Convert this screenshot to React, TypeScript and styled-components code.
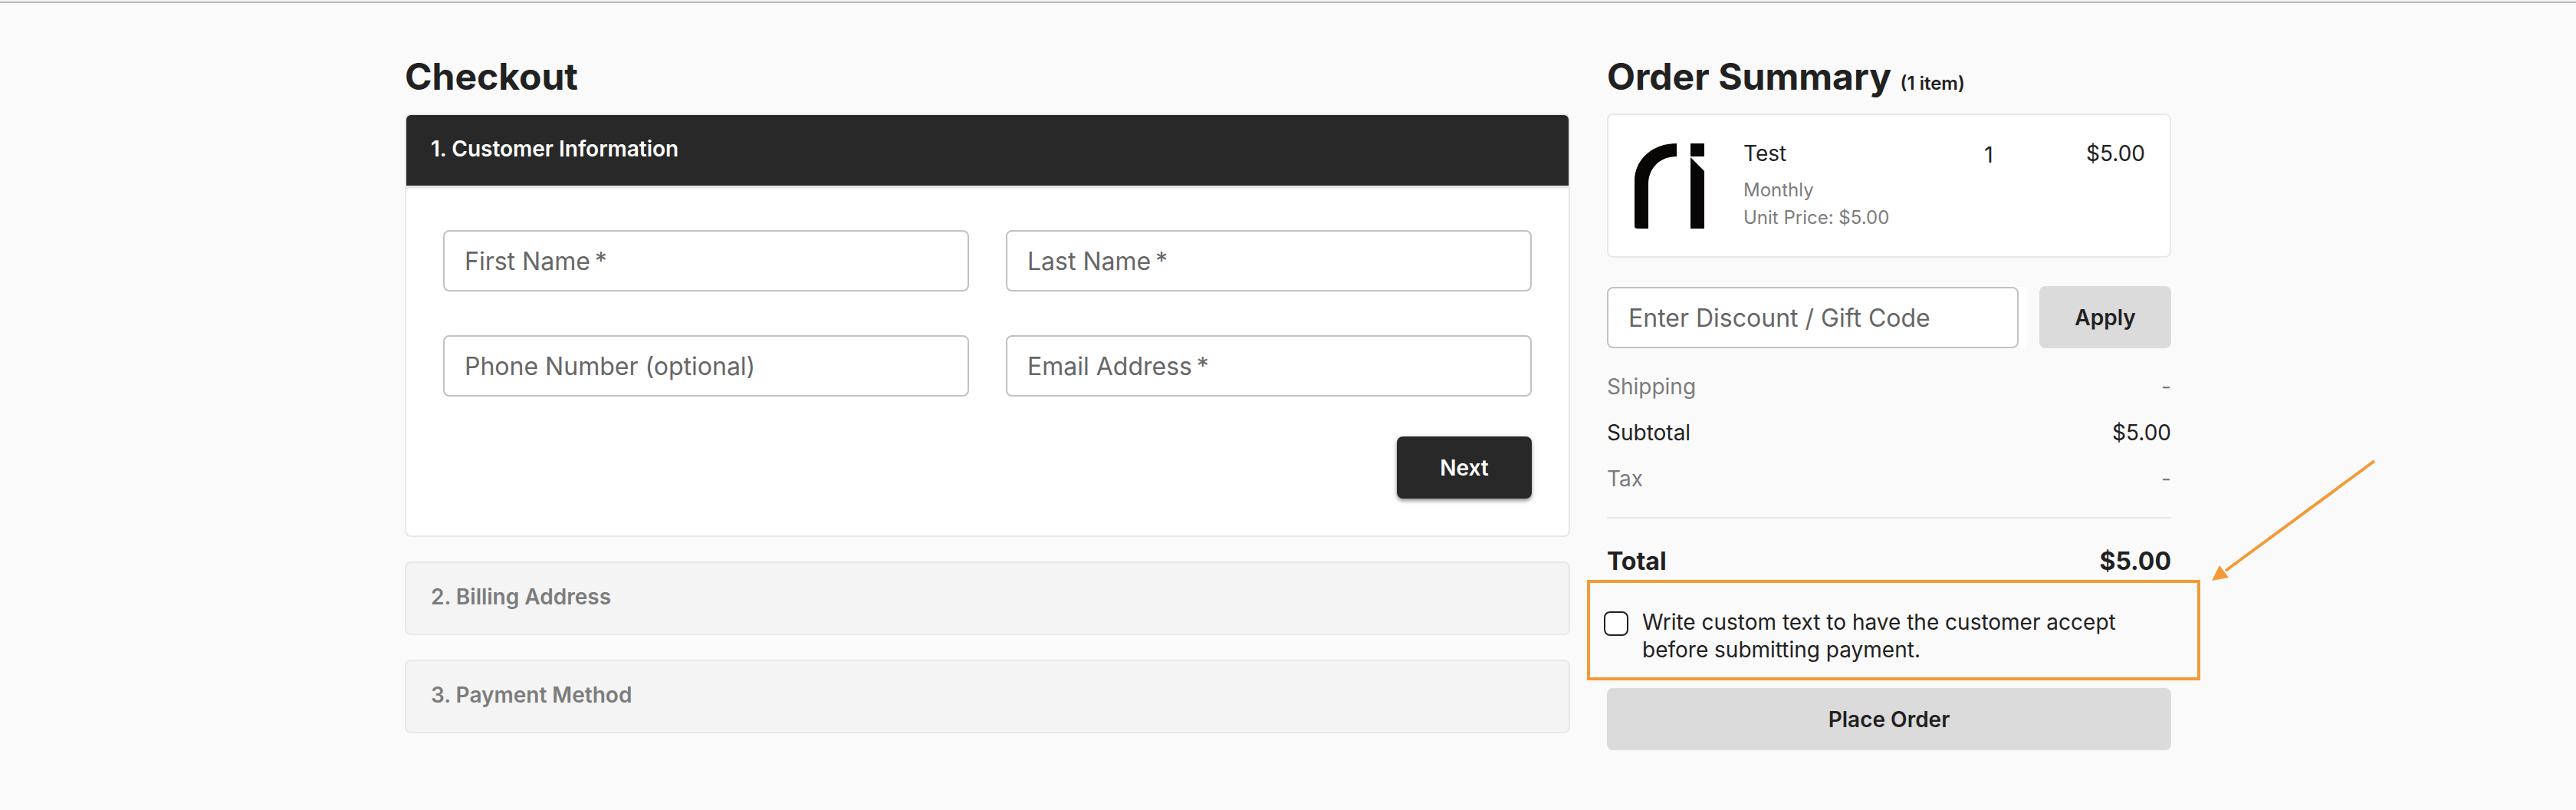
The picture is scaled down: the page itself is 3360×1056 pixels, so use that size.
import React from "react";
import styled, { createGlobalStyle, css } from "styled-components";

const color = {
  page: "#fafafa",
  surface: "#ffffff",
  ink: "#212121",
  dark: "#282828",
  muted: "#7c7c7c",
  label: "#666666",
  line: "#e8e8e8",
  field: "#c2c2c2",
  button: "#dbdbdb",
  accent: "#f39a37",
};

const GlobalStyle = createGlobalStyle`
  *, *::before, *::after { box-sizing: border-box; }
  body {
    margin: 0;
    background: ${color.page};
    color: ${color.ink};
    font-family: Inter, "Liberation Sans", sans-serif;
    font-size: 28px;
    line-height: 36px;
  }
  button, input { font: inherit; }
`;

const Page = styled.div`
  border-top: 2px solid #f4f4f4;
  min-height: 100vh;
`;

const TopRule = styled.div`
  height: 2px;
  background: #bababa;
`;

const Columns = styled.main`
  display: grid;
  grid-template-columns: minmax(0, 1520fr) minmax(0, 736fr);
  gap: 48px;
  align-items: start;
  max-width: 2400px;
  margin: 0 auto;
  padding: 64px 48px;
`;

const Column = styled.section`
  display: flex;
  flex-direction: column;
`;

const Title = styled.h1`
  margin: 0 0 16px;
  font-size: 48px;
  line-height: 64px;
  font-weight: 700;
`;

const Count = styled.small`
  font-size: 24px;
  line-height: 24px;
  font-weight: 600;
`;

const Steps = styled.div`
  display: flex;
  flex-direction: column;
  gap: 32px;
`;

const Step = styled.section<{ $active?: boolean }>`
  overflow: hidden;
  border: 2px solid ${color.line};
  border-radius: 8px;
  background: ${(p) => (p.$active ? color.surface : "#f4f4f4")};
`;

const StepTitle = styled.h2<{ $active?: boolean }>`
  margin: 0;
  padding: 26px 32px 30px;
  font-size: 28px;
  line-height: 36px;
  font-weight: 600;
  color: ${color.muted};
  ${(p) =>
    p.$active &&
    css`
      color: #ffffff;
      background: ${color.dark};
      border-bottom: 4px solid ${color.line};
      background-clip: padding-box;
    `}
`;

const Form = styled.form`
  display: grid;
  grid-template-columns: 1fr 1fr;
  gap: 57px 48px;
  padding: 54px 48px 48px;
`;

const Actions = styled.div`
  grid-column: 1 / -1;
  display: flex;
  justify-content: flex-end;
  margin-top: -5px;
`;

const FieldBox = styled.div`
  display: grid;
  flex: 1;
`;

const FieldLabel = styled.label`
  grid-area: 1 / 1;
  align-self: center;
  padding: 2px 28px 0;
  font-size: 32px;
  line-height: 40px;
  color: ${color.label};
  pointer-events: none;
  z-index: 1;
`;

const FieldInput = styled.input`
  grid-area: 1 / 1;
  width: 100%;
  min-width: 0;
  height: 80px;
  padding: 0 28px;
  border: 2px solid ${color.field};
  border-radius: 8px;
  background: ${color.surface};
  font-size: 32px;
  color: ${color.ink};

  &:not(:placeholder-shown) {
    z-index: 2;
  }
`;

const Button = styled.button<{ $tone: "dark" | "light" }>`
  height: 81px;
  min-width: 172px;
  padding: 0 40px;
  border: 0;
  border-radius: 8px;
  font-size: 28px;
  font-weight: 600;
  color: ${(p) => (p.$tone === "dark" ? "#ffffff" : color.ink)};
  background: ${(p) => (p.$tone === "dark" ? color.dark : color.button)};
  ${(p) =>
    p.$tone === "dark" &&
    css`
      min-width: 176px;
      box-shadow: 0 3px 4px rgba(0, 0, 0, 0.35), 0 2px 10px rgba(0, 0, 0, 0.12);
    `}
`;

const Item = styled.article`
  display: grid;
  grid-template-columns: 96px 1fr 48px 180px;
  align-items: start;
  min-height: 188px;
  padding: 32px;
  border: 2px solid ${color.line};
  border-radius: 8px;
  background: ${color.surface};
`;

const Logo = styled.svg`
  display: block;
  margin-top: 5px;
`;

const ItemInfo = styled.div`
  padding-left: 48px;
`;

const ItemCell = styled.div<{ $align: "center" | "right" }>`
  text-align: ${(p) => p.$align};
  padding-top: ${(p) => (p.$align === "center" ? "2px" : "0")};
`;

const ItemName = styled.div`
  margin-bottom: 12px;
`;

const ItemNote = styled.div`
  font-size: 24px;
  color: ${color.muted};
`;

const CodeForm = styled.form`
  display: flex;
  gap: 16px;
  margin-top: 37px;
`;

const CodeField = styled.div`
  display: flex;
  flex: 1;
  margin-top: 1px;
  padding-right: 11px;
  background: ${color.surface};
`;

const Totals = styled.dl`
  margin: 0;
  padding: 32px 0;
  display: flex;
  flex-direction: column;
  gap: 24px;
  border-bottom: 2px solid ${color.line};
`;

const TotalRow = styled.div<{ $muted?: boolean }>`
  display: flex;
  justify-content: space-between;
  color: ${(p) => (p.$muted ? color.muted : color.ink)};
  dd {
    margin: 0;
  }
`;

const GrandTotal = styled.div`
  display: flex;
  justify-content: space-between;
  padding: 36px 0 4px;
  font-size: 32px;
  line-height: 40px;
  font-weight: 700;
`;

const Highlight = styled.div`
  position: relative;
  margin: 0 -38px 10px -26px;
  border: 4px solid ${color.accent};
`;

const Consent = styled.label`
  display: flex;
  gap: 18px;
  padding: 33px 64px 18px 18px;
`;

const Check = styled.input`
  appearance: none;
  flex: none;
  width: 32px;
  height: 32px;
  margin: 4px 0 0;
  border: 2px solid ${color.ink};
  border-radius: 8px;
  background: ${color.surface};

  &:checked {
    background: ${color.dark};
  }
`;

const Arrow = styled.svg`
  position: absolute;
  left: 100%;
  bottom: 100%;
  margin: 0 0 2px 19px;
`;

type FieldProps = { id: string; label: string; required?: boolean; type?: string };

function Field({ id, label, required, type = "text" }: FieldProps) {
  return (
    <FieldBox>
      <FieldLabel htmlFor={id}>
        {label}
        {required && "\u2009*"}
      </FieldLabel>
      <FieldInput id={id} type={type} placeholder=" " required={required} />
    </FieldBox>
  );
}

export default function App() {
  return (
    <>
      <GlobalStyle />
      <Page>
        <TopRule />
        <Columns>
          <Column>
            <Title>Checkout</Title>
            <Steps>
              <Step $active>
                <StepTitle $active>1. Customer Information</StepTitle>
                <Form onSubmit={(e) => e.preventDefault()}>
                  <Field id="first-name" label="First Name" required />
                  <Field id="last-name" label="Last Name" required />
                  <Field id="phone" label="Phone Number (optional)" type="tel" />
                  <Field id="email" label="Email Address" type="email" required />
                  <Actions>
                    <Button $tone="dark" type="submit">Next</Button>
                  </Actions>
                </Form>
              </Step>
              <Step>
                <StepTitle>2. Billing Address</StepTitle>
              </Step>
              <Step>
                <StepTitle>3. Payment Method</StepTitle>
              </Step>
            </Steps>
          </Column>

          <Column>
            <Title>
              Order Summary <Count>(1 item)</Count>
            </Title>
            <Item>
              <Logo width="96" height="112" viewBox="0 0 96 112" fill="#080604" aria-hidden="true">
                <path d="M2 108V49C2 21 25 0 57 0V17C36 17 20 31 20 54V111H6Q2 111 2 108Z" />
                <path d="M75 0H93V17H75Z" />
                <path d="M75 18L93 36V111H75Z" />
              </Logo>
              <ItemInfo>
                <ItemName>Test</ItemName>
                <ItemNote>Monthly</ItemNote>
                <ItemNote>Unit Price: $5.00</ItemNote>
              </ItemInfo>
              <ItemCell $align="center">1</ItemCell>
              <ItemCell $align="right">$5.00</ItemCell>
            </Item>
            <CodeForm onSubmit={(e) => e.preventDefault()}>
              <CodeField>
                <Field id="code" label="Enter Discount / Gift Code" />
              </CodeField>
              <Button $tone="light" type="submit">Apply</Button>
            </CodeForm>
            <Totals>
              <TotalRow $muted>
                <dt>Shipping</dt>
                <dd>-</dd>
              </TotalRow>
              <TotalRow>
                <dt>Subtotal</dt>
                <dd>$5.00</dd>
              </TotalRow>
              <TotalRow $muted>
                <dt>Tax</dt>
                <dd>-</dd>
              </TotalRow>
            </Totals>
            <GrandTotal>
              <span>Total</span>
              <span>$5.00</span>
            </GrandTotal>
            <Highlight>
              <Consent htmlFor="consent">
                <Check id="consent" type="checkbox" />
                <span>Write custom text to have the customer accept before submitting payment.</span>
              </Consent>
              <Arrow width="216" height="160" viewBox="0 0 216 160" aria-hidden="true">
                <path d="M18 146L212 3" stroke={color.accent} strokeWidth="4" />
                <path d="M0 159L10 139L22 155Z" fill={color.accent} />
              </Arrow>
            </Highlight>
            <Button $tone="light" type="button">Place Order</Button>
          </Column>
        </Columns>
      </Page>
    </>
  );
}
